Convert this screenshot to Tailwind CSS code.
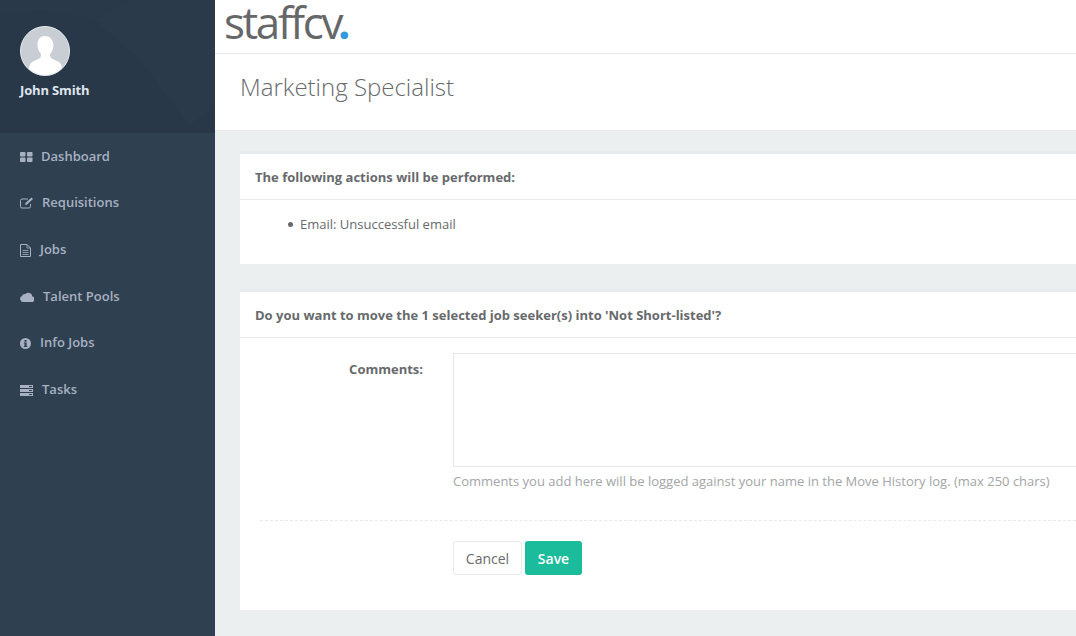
<!DOCTYPE html>
<html lang="en">
<head>
  <meta charset="UTF-8" />
  <title>Marketing Specialist</title>
  <script src="https://cdn.jsdelivr.net/npm/@tailwindcss/browser@4"></script>
</head>
<body class="h-[636px] w-[1076px] overflow-hidden bg-[#ebeff0] font-['Open_Sans',sans-serif] text-[#676a6c]">
  <div class="flex h-[636px]">

    <!-- sidebar -->
    <aside class="w-[215px] shrink-0 bg-[#2f4050]">
      <div class="relative h-[133px] overflow-hidden bg-[#283848]">
        <svg class="absolute inset-0" width="215" height="133" viewBox="0 0 215 133">
          <polygon points="95,20 130,0 215,0 215,105 190,125 140,60" fill="#2a3a4a" />
          <polygon points="0,0 130,0 95,20 40,10 0,14" fill="#2a3949" />
        </svg>
        <div class="relative flex flex-col pl-[19px] pt-[26px]">
          <div class="ml-[1px] h-[50px] w-[50px] overflow-hidden rounded-full border border-[#e8ebee] bg-[#c9ced4]">
            <svg width="48" height="48" viewBox="0 0 48 48">
              <path d="M24 9c-4.500 0-7.500 3-7.500 8.500 0 4 1.500 7.500 3.500 9.500 0 3-.5 4-2.500 5-3 1.500-6 2-8 4.500-1.500 2-1.500 5-1.500 11.500h33c0-6.500 0-9.500-1.500-11.500-2-2.500-5-3-8-4.500-2-1-2.500-2-2.500-5 2-2 3.500-5.500 3.500-9.500C31.500 12 28.500 9 24 9z" fill="#ffffff" />
            </svg>
          </div>
          <span class="ml-[1px] mt-[5px] text-[13px] leading-[18px] font-bold tracking-[-0.15px] text-[#dfe4ed]">John Smith</span>
        </div>
      </div>

      <nav class="pl-[20px] pt-[14px] text-[13px] font-semibold text-[#a7b1c2]">
        <a class="flex h-[20px] items-center">
          <svg class="w-[13px] h-[12px]" viewBox="0 0 13 12" fill="#a7b1c2">
            <rect x="0" y="1" width="5.500" height="4.500" rx=".8" /><rect x="7" y="1" width="5.500" height="4.500" rx=".8" />
            <rect x="0" y="6.500" width="5.500" height="4.500" rx=".8" /><rect x="7" y="6.500" width="5.500" height="4.500" rx=".8" />
          </svg>
          <span class="ml-[8px]">Dashboard</span>
        </a>
        <a class="mt-[26px] flex h-[20px] items-center">
          <svg class="w-[14px] h-[12px]" viewBox="0 0 14 12" fill="none" stroke="#a7b1c2">
            <path d="M10.500 7v2.500a1.500 1.500 0 0 1-1.500 1.500H2a1.500 1.500 0 0 1-1.500-1.500v-6A1.500 1.500 0 0 1 2 2h6" />
            <path d="M5 8l.5-2 6-5.500 1.500 1.500-6 5.500z" fill="#a7b1c2" stroke="none" />
          </svg>
          <span class="ml-[8px]">Requisitions</span>
        </a>
        <a class="mt-[27px] flex h-[20px] items-center">
          <svg class="w-[11px] h-[13px]" viewBox="0 0 11 13" fill="none" stroke="#a7b1c2">
            <path d="M.5.5h6.500l3.500 3.500v8.500H.5z" /><path d="M7 .5V4h3.500M2.500 6.500h6M2.500 8.500h6M2.500 10.500h6" stroke-width=".8" />
          </svg>
          <span class="ml-[9px]">Jobs</span>
        </a>
        <a class="mt-[27px] flex h-[20px] items-center">
          <svg class="w-[14px] h-[10px]" viewBox="0 0 14 10" fill="#a7b1c2">
            <path d="M3.200 10A3.200 3.200 0 0 1 2 3.900 3 3 0 0 1 5.500 2 3.900 3.900 0 0 1 12.300 4.500 2.800 2.800 0 0 1 11.200 10z" />
          </svg>
          <span class="ml-[9px]">Talent Pools</span>
        </a>
        <a class="mt-[26px] flex h-[20px] items-center">
          <svg class="w-[11px] h-[11px]" viewBox="0 0 11 11">
            <circle cx="5.500" cy="5.500" r="5.500" fill="#a7b1c2" />
            <rect x="4.500" y="2" width="2" height="1.800" fill="#2f4050" /><path d="M3.800 4.600h2.800v3.400h.7v1H3.800v-1h.7V5.600h-.7z" fill="#2f4050" />
          </svg>
          <span class="ml-[9px]">Info Jobs</span>
        </a>
        <a class="mt-[27px] flex h-[20px] items-center">
          <svg class="w-[13px] h-[11px]" viewBox="0 0 13 11" fill="#a7b1c2">
            <rect width="13" height="3" /><rect y="4" width="13" height="3" /><rect y="8" width="13" height="3" />
            <rect x="9" y="1" width="3" height="1" fill="#2f4050" /><rect x="9" y="5" width="3" height="1" fill="#2f4050" /><rect x="9" y="9" width="3" height="1" fill="#2f4050" />
          </svg>
          <span class="ml-[9px]">Tasks</span>
        </a>
      </nav>
    </aside>

    <!-- main column -->
    <main class="min-w-0 flex-1 overflow-hidden">
      <div class="h-[54px] border-b border-[#e7eaec] bg-white pl-[9px]">
        <span class="block text-[44px] leading-[44px] font-normal tracking-[-2.400px] text-[#666769]">staffcv<span class="-ml-[3px] font-bold text-[#3498db]">.</span></span>
      </div>
      <div class="flex h-[77px] items-center border-b border-[#e7eaec] bg-white pb-[10px] pl-[25px]">
        <h1 class="text-[24px] leading-[26px] font-light text-[#676a6c]">Marketing Specialist</h1>
      </div>

      <div class="-mr-[20px] pl-[25px] pt-[20px]">
        <section class="h-[113px] border-t-[3px] border-[#e7eaec] bg-white">
          <h2 class="flex h-[46px] items-center border-b border-[#e7eaec] pl-[15px] pt-[2px] text-[13px] font-bold">The following actions will be performed:</h2>
          <div class="flex items-center pl-[48px] pt-[15px] text-[13px] leading-[19px]">
            <span class="h-[5px] w-[5px] rounded-full bg-[#676a6c]"></span>
            <span class="ml-[7px]">Email: Unsuccessful email</span>
          </div>
        </section>

        <section class="mt-[25px] h-[321px] border-t-[3px] border-[#e7eaec] bg-white">
          <h2 class="flex h-[46px] items-center border-b border-[#e7eaec] pl-[15px] pt-[2px] text-[13px] font-bold">Do you want to move the 1 selected job seeker(s) into 'Not Short-listed'?</h2>
          <div class="flex pt-[15px]">
            <label class="w-[183px] shrink-0 pt-[7px] text-right text-[13px] leading-[19px] font-bold">Comments:</label>
            <div class="ml-[30px] flex-1">
              <div class="h-[114px] border border-[#e5e6e7] bg-white"></div>
              <p class="mt-[5px] text-[13px] leading-[19px] whitespace-nowrap text-[#a3a5a7]">Comments you add here will be logged against your name in the Move History log. (max 250 chars)</p>
            </div>
          </div>
          <div class="ml-[20px] mt-[29px] border-t border-dashed border-[#e7eaec]"></div>
          <div class="flex gap-[3px] pl-[213px] pt-[20px]">
            <button class="h-[34px] w-[69px] rounded-[3px] border border-[#e7eaec] bg-white text-[14px] text-[#676a6c]">Cancel</button>
            <button class="h-[34px] w-[57px] rounded-[3px] bg-[#1abc9c] text-[14px] font-semibold text-white">Save</button>
          </div>
        </section>
      </div>
    </main>
  </div>
</body>
</html>
